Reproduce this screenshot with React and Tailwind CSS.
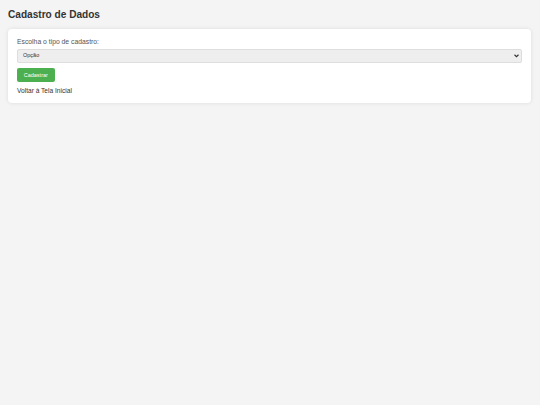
export default function App() {
  return (
    <div
      className="min-h-screen bg-[#f4f4f4] px-[8px] pt-[8px]"
      style={{ fontFamily: '"Liberation Sans", Arial, sans-serif' }}
    >
      <h1 className="text-[10.1px] leading-[13px] font-bold text-[#333]">Cadastro de Dados</h1>
      <div className="mt-[7.5px] w-[523px] rounded-[4px] bg-white px-[9px] pt-[8px] pb-[8px] shadow-[0_0_4px_rgba(0,0,0,0.1)]">
        <label className="block text-[6.8px] leading-[9px] text-[#555]">Escolha o tipo de cadastro:</label>
        <div className="relative mt-[3.5px]">
          <select className="block h-[13.6px] w-full appearance-none rounded-[2px] border border-[#ddd] bg-[#eee] pl-[5px] text-[5.5px] leading-[11px] text-[#333]">
            <option>Opção</option>
          </select>
          <svg
            className="pointer-events-none absolute right-[3px] top-[5px] h-[4px] w-[5px]"
            viewBox="0 0 10 8"
          >
            <path d="M1 1.5 L5 5.5 L9 1.5" fill="none" stroke="#333" strokeWidth="2.2" />
          </svg>
        </div>
        <button className="mt-[5.4px] block h-[14px] w-[37.6px] rounded-[2px] bg-[#4caf50] text-[5.5px] text-white">
          Cadastrar
        </button>
        <a className="mt-[3.8px] block text-[6.6px] leading-[9px] text-[#333]">Voltar à Tela Inicial</a>
      </div>
    </div>
  )
}
